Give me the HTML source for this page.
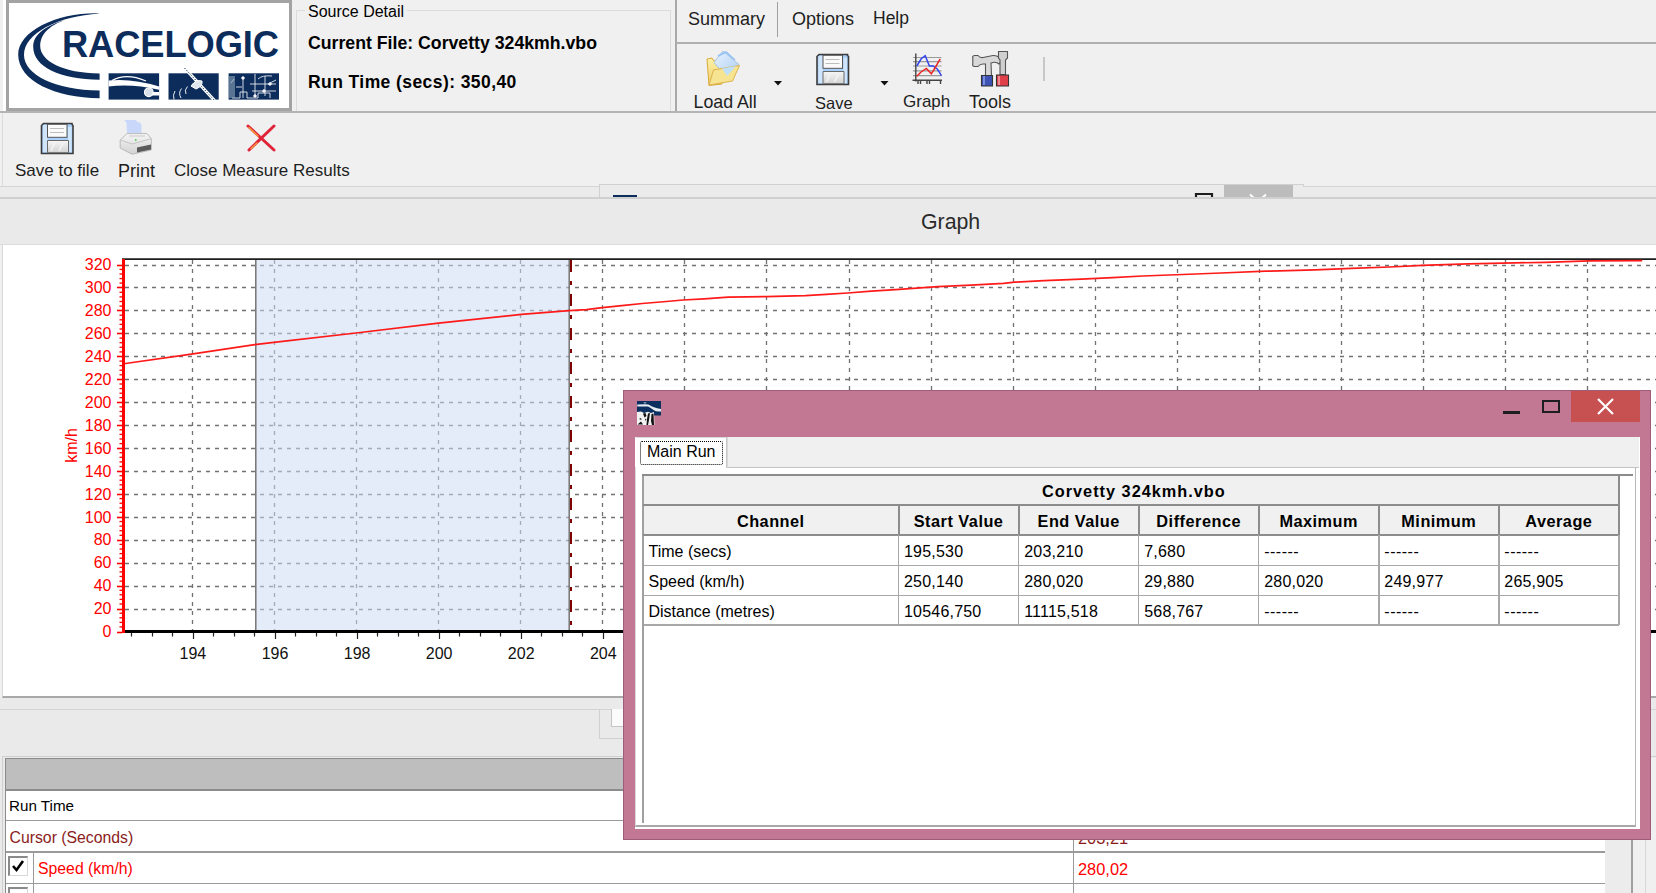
<!DOCTYPE html>
<html><head><meta charset="utf-8">
<style>
*{margin:0;padding:0;box-sizing:border-box}
html,body{width:1656px;height:893px;overflow:hidden;background:#f0f0f0;font-family:"Liberation Sans",sans-serif;position:relative}
.a{position:absolute}
.t{position:absolute;white-space:nowrap;line-height:1}
</style></head><body>

<!-- ===== TOP AREA ===== -->
<div class="a" style="left:3px;top:0;width:3px;height:111px;background:#fff"></div>
<div class="a" style="left:6px;top:0;width:286px;height:111px;background:#fff;border:3px solid #a3a3a3"></div>
<svg class="a" style="left:0;top:0" width="300" height="112" viewBox="0 0 300 112">
<g fill="#0c2d5b">
<path d="M99.6 13.4 C60 12 18 30 18.2 55 C18.6 81 55 97.8 99.6 98.2 L99.6 90.6 C55 90 24 74.5 24 55 C24 33 58 16 99.6 13.4Z"/>
<path d="M76 17 C46 24 33 34 33.2 47 C33.5 67 60 79.5 99.6 79.8 L99.6 73.6 C63 73 40.2 61 40.2 46 C40.3 32 53 22 76 17Z"/>
<text x="62" y="56.8" font-family="Liberation Sans" font-weight="bold" font-size="36.3" letter-spacing="-0.1">RACELOGIC</text>
<rect x="108.6" y="73.3" width="50.5" height="26.3"/>
<rect x="168.5" y="73.3" width="50.2" height="26.3"/>
<rect x="228.6" y="73.3" width="50.4" height="26.3"/>
</g>
<g fill="#fff" stroke="none">
<path d="M108.6 80.5 Q132 78 159.1 86.5 L159.1 89.8 Q132 83.5 108.6 86.5Z"/>
<rect x="152" y="92" width="7.2" height="3.5"/>
</g>
<path d="M112 80.5 Q126 72.5 146 81" fill="none" stroke="#fff" stroke-width="1.1"/>
<circle cx="148.8" cy="92.3" r="4.3" fill="#d9e0e8" stroke="#fff" stroke-width="1.2"/>
<g stroke="#fff" fill="none">
<path d="M184.5 68 L214.5 100.5" stroke-width="3.2"/>
<path d="M184.5 68 L214.5 100.5" stroke="#0c2d5b" stroke-width="1" stroke-dasharray="1.3 1.7"/>
<path d="M191 86 Q196 79 202 81 Q203 86 196 89Z" fill="#dfe5ec" stroke-width="1"/>
<path d="M187.5 86.5 Q184 90 186 94" stroke-width="0.9"/>
<path d="M181.5 88.5 Q178 93 181 98" stroke-width="0.9"/>
<path d="M175 91 Q172.5 95 174 99.5" stroke-width="0.9"/>
</g>
<g stroke="#e6ebf1" fill="none" stroke-width="0.9">
<path d="M243 77 V98 M255 74 V96 M265 76 V96 M231 83 L234 79 M232 98 H240 V92 H247 V98 H258 V93 H270 V98 M250 84 H276 M252 91 H276 M258 79 Q262 75 272 76 M268 84 L276 80 M236 87 H242"/>
<circle cx="243" cy="78" r="1.3" fill="#fff"/>
<circle cx="255" cy="96" r="1.3" fill="#fff"/>
<circle cx="270" cy="84" r="1.3" fill="#fff"/>
<circle cx="264" cy="91" r="1.3" fill="#fff"/>
<rect x="229" y="76" width="6" height="22" fill="#8fa3ba" stroke="none" opacity="0.6"/>
</g>
</svg>


<!-- group box -->
<div class="a" style="left:296px;top:10px;width:375px;height:102px;border:1px solid #dcdcdc;border-bottom:none"></div>
<div class="t" style="left:305px;top:3.5px;padding:0 3px;background:#f0f0f0;font-size:16px;color:#000">Source Detail</div>
<div class="t" style="left:308px;top:35.2px;font-size:17.7px;font-weight:bold;color:#000">Current File: Corvetty 324kmh.vbo</div>
<div class="t" style="left:308px;top:74px;font-size:17.5px;font-weight:bold;color:#000;letter-spacing:0.42px">Run Time (secs): 350,40</div>

<div class="a" style="left:675px;top:0;width:2px;height:112px;background:#a9a9a9"></div>
<div class="a" style="left:676px;top:42px;width:980px;height:2px;background:#b0b0b0"></div>
<div class="a" style="left:0;top:111px;width:1656px;height:2px;background:#b4b4b4"></div>

<!-- menu -->
<div class="t" style="left:688px;top:10px;font-size:18px;color:#1e1e1e">Summary</div>
<div class="a" style="left:777px;top:2px;width:1px;height:35px;background:#a0a0a0"></div>
<div class="t" style="left:792px;top:10px;font-size:18px;color:#1e1e1e">Options</div>
<div class="t" style="left:873px;top:10px;font-size:17.5px;color:#1e1e1e">Help</div>

<!-- toolbar 1 labels -->
<div class="t" style="left:693.5px;top:93.5px;font-size:17.8px;color:#1e1e1e">Load All</div>
<div class="t" style="left:815px;top:94.5px;font-size:16.5px;color:#1e1e1e">Save</div>
<div class="t" style="left:903px;top:93px;font-size:17px;color:#1e1e1e">Graph</div>
<div class="t" style="left:969px;top:93px;font-size:18px;color:#1e1e1e">Tools</div>
<div class="a" style="left:1043px;top:57px;width:2px;height:24px;background:#c8c8c8"></div>

<!-- ===== TOOLBAR 2 ===== -->
<div class="a" style="left:2px;top:113px;width:1654px;height:74px;border-left:1px solid #dcdcdc;border-bottom:1px solid #dcdcdc"></div>
<div class="t" style="left:15px;top:162px;font-size:17px;color:#1e1e1e">Save to file</div>
<div class="t" style="left:118px;top:162px;font-size:18px;color:#1e1e1e">Print</div>
<div class="t" style="left:174px;top:162px;font-size:17px;color:#1e1e1e">Close Measure Results</div>

<!-- hidden dialog strip -->
<div class="a" style="left:599px;top:184px;width:705px;height:15px;background:#ebebeb;border:1px solid #d0d0d0;border-bottom:none"></div>
<div class="a" style="left:1224px;top:185px;width:69px;height:13px;background:#bcbcbc"></div>
<div class="a" style="left:1303px;top:186px;width:353px;height:12px;background:#ebebeb;border-top:1px solid #d4d4d4"></div>
<div class="a" style="left:0px;top:186px;width:599px;height:12px;background:#ebebeb;border-top:1px solid #d4d4d4"></div>

<svg class="a" style="left:0;top:0" width="1656" height="200" viewBox="0 0 1656 200">
<defs>
<linearGradient id="fy" x1="0" y1="0" x2="0" y2="1"><stop offset="0" stop-color="#fbf2a8"/><stop offset="1" stop-color="#f2cf6a"/></linearGradient>
<linearGradient id="fb" x1="0" y1="0" x2="1" y2="1"><stop offset="0" stop-color="#eaf3fd"/><stop offset="1" stop-color="#a9cdf5"/></linearGradient>
<linearGradient id="gr" x1="0" y1="0" x2="0" y2="1"><stop offset="0" stop-color="#f6f6f6"/><stop offset="1" stop-color="#d2d2d2"/></linearGradient>
<g id="floppy">
<path d="M0.5 2.5 L2.5 0.5 L31 0.5 L31 1.5 L32 2.5 L32 30.5 L0.5 30.5Z" fill="#a8d0fa" stroke="#3c3c3c" stroke-width="1.6"/>
<rect x="2" y="2" width="4.5" height="27" fill="#cfe5fc"/>
<rect x="27" y="4" width="3.5" height="25" fill="#cfe5fc"/>
<rect x="6.5" y="1.3" width="19.5" height="13" fill="#fafafa" stroke="#555" stroke-width="1"/>
<path d="M9 5.5 H23 M9 9.5 H23" stroke="#bdbdbd" stroke-width="1"/>
<path d="M6.5 17.5 H27.5 V29.7 H6.5Z" fill="url(#gr)" stroke="#6a6a6a" stroke-width="1"/>
<path d="M14 19 L10 28 M22 20 L18 28" stroke="#f4f4f4" stroke-width="1.5"/>
</g>
</defs>

<!-- Load All: open folder with doc -->
<path d="M707 59 L712 58 L714 61 L722 61 L722 84 L709 85.5Z" fill="url(#fy)" stroke="#d9aa3c" stroke-width="1"/>
<path d="M723 51 L739 64.5 L726.5 77 L714 62.5Z" fill="url(#fb)" stroke="#9ab8dc" stroke-width="0.8"/>
<path d="M718 56 L726 52 L735 60" fill="none" stroke="#8fc0f4" stroke-width="1.5"/>
<path d="M709 85 L713.5 70 L739.5 65.5 L732.5 81Z" fill="#f7e493" stroke="#ddb24a" stroke-width="1"/>
<path d="M722 68.5 L736 66 L727 76Z" fill="#bfe0f6"/>
<!-- dropdown arrows -->
<path d="M774 81 H782 L778 85.5Z" fill="#111"/>
<path d="M880.5 81 H888.5 L884.5 85.5Z" fill="#111"/>
<!-- Save toolbar -->
<use href="#floppy" x="816.5" y="54"/>
<!-- Graph icon -->
<g stroke-width="1.2" fill="none">
<path d="M913 57.5 H941.5 M913 61.7 H941.5 M913 66 H941.5 M913 70.8 H941.5 M913 75.6 H941.5" stroke="#9a9a9a"/>
<path d="M915.8 53.5 V81.5 M912.5 80.2 H942 M918 80 V84 M920.5 80 V84 M927 80 V84 M929.5 80 V84 M940.5 80 V84" stroke="#444" stroke-width="1.4"/>
<path d="M916.8 66 L921 59 L925.2 55.7 L929.4 66 L933 66 L937.3 69 L941.5 75.6" stroke="#3344ee" stroke-width="1.5"/>
<path d="M916.8 76.2 L921 72 L926.4 68.4 L931.3 73.8 L935 68 L938.5 61.7 L940.3 59" stroke="#ee2222" stroke-width="1.5"/>
</g>
<!-- Tools icon -->
<path d="M972.8 58 Q972 56 974.5 55.5 L978 55.5 Q980 58 983 57.5 L993 55.5 Q1000 55 1001 62 L999 64 Q996 61 991 63 L991.5 76 L985.5 76 L985.5 64 L983 64 Q980 64 978 66.5 L974.5 66.5 Q972 66 972.8 64Z" fill="#d8d8d8" stroke="#555" stroke-width="1.1"/>
<path d="M981.5 75.5 H992.5 V86 H981.5Z" fill="#3c52b4" stroke="#333" stroke-width="1.1"/>
<path d="M984 76 V85" stroke="#8ea0e6" stroke-width="1.5"/>
<path d="M998.5 51.5 H1007.5 V58 L1005.5 60 V74.5 H1000 V60 L998.5 58Z" fill="#cfcfcf" stroke="#555" stroke-width="1.1"/>
<path d="M996.5 75 H1008.5 V86 H996.5Z" fill="#e0404a" stroke="#333" stroke-width="1.1"/>
<path d="M999 76 V85" stroke="#f7a2a8" stroke-width="1.5"/>
<!-- separator handled in html -->

<!-- Save to file floppy -->
<use href="#floppy" x="41" y="123"/>
<!-- Print icon -->
<path d="M124.3 120 H136 L137.5 122 L140 122.5 L141.5 125 V133 H127 L126.5 123Z" fill="#c9d8fa"/>
<path d="M120.2 140 L127 133.6 L147 133.6 L151.3 138.7 L151.3 150 L132 154.2 L120.2 148Z" fill="url(#gr)" stroke="#b4b4b4" stroke-width="0.9"/>
<path d="M120.2 140 L132 144 L151.3 138.7" fill="none" stroke="#c4c4c4" stroke-width="1"/>
<path d="M137 147.5 L151 144.5 V149.5 L137 152.5Z" fill="#5a5a5a"/>
<path d="M129 136 L145 136" stroke="#dedede" stroke-width="2"/>
<circle cx="135.8" cy="140" r="0.9" fill="#5c5"/>
<!-- Close X icon -->
<path d="M248 126 L274 150 M274 126 L249 150" stroke="#e0243a" stroke-width="3" stroke-linecap="round"/>
<path d="M249 127.5 L258 136" stroke="#f59a3a" stroke-width="1.5" stroke-linecap="round"/>
<path d="M251 148.5 L257 143" stroke="#f59a3a" stroke-width="1.4" stroke-linecap="round"/>

<!-- hidden dialog pieces -->
<rect x="613" y="195" width="24" height="3" fill="#0c2d5b"/>
<path d="M1196 198 V194 H1212 V198" fill="none" stroke="#1e1e1e" stroke-width="2.2"/>
<path d="M1250 194.5 L1254 198 M1266 194.5 L1262 198" stroke="#fff" stroke-width="2"/>
</svg>

<!-- ===== GRAPH HEADER ===== -->
<div class="a" style="left:0;top:197px;width:1656px;height:48px;background:#eaeaea;border-top:2px solid #d0d0d0;border-bottom:1px solid #dcdcdc"></div>
<div class="t" style="left:921px;top:212px;font-size:21.3px;color:#2a2a2a">Graph</div>

<!-- ===== WHITE GRAPH PANEL ===== -->
<div class="a" style="left:2px;top:245px;width:1654px;height:453px;background:#fff;border-left:1px solid #dadada;border-bottom:2px solid #a8a8a8"></div>

<svg class="a" style="left:0;top:245px" width="1656" height="452" viewBox="0 245 1656 452">
<line x1="125" y1="265.5" x2="1656" y2="265.5" stroke="#727272" stroke-width="1.3" stroke-dasharray="4 5"/>
<line x1="125" y1="287.5" x2="1656" y2="287.5" stroke="#727272" stroke-width="1.3" stroke-dasharray="4 5"/>
<line x1="125" y1="310.5" x2="1656" y2="310.5" stroke="#727272" stroke-width="1.3" stroke-dasharray="4 5"/>
<line x1="125" y1="333.5" x2="1656" y2="333.5" stroke="#727272" stroke-width="1.3" stroke-dasharray="4 5"/>
<line x1="125" y1="356.5" x2="1656" y2="356.5" stroke="#727272" stroke-width="1.3" stroke-dasharray="4 5"/>
<line x1="125" y1="379.5" x2="1656" y2="379.5" stroke="#727272" stroke-width="1.3" stroke-dasharray="4 5"/>
<line x1="125" y1="402.5" x2="1656" y2="402.5" stroke="#727272" stroke-width="1.3" stroke-dasharray="4 5"/>
<line x1="125" y1="425.5" x2="1656" y2="425.5" stroke="#727272" stroke-width="1.3" stroke-dasharray="4 5"/>
<line x1="125" y1="448.5" x2="1656" y2="448.5" stroke="#727272" stroke-width="1.3" stroke-dasharray="4 5"/>
<line x1="125" y1="471.5" x2="1656" y2="471.5" stroke="#727272" stroke-width="1.3" stroke-dasharray="4 5"/>
<line x1="125" y1="494.5" x2="1656" y2="494.5" stroke="#727272" stroke-width="1.3" stroke-dasharray="4 5"/>
<line x1="125" y1="517.5" x2="1656" y2="517.5" stroke="#727272" stroke-width="1.3" stroke-dasharray="4 5"/>
<line x1="125" y1="540.5" x2="1656" y2="540.5" stroke="#727272" stroke-width="1.3" stroke-dasharray="4 5"/>
<line x1="125" y1="563.5" x2="1656" y2="563.5" stroke="#727272" stroke-width="1.3" stroke-dasharray="4 5"/>
<line x1="125" y1="586.5" x2="1656" y2="586.5" stroke="#727272" stroke-width="1.3" stroke-dasharray="4 5"/>
<line x1="125" y1="609.5" x2="1656" y2="609.5" stroke="#727272" stroke-width="1.3" stroke-dasharray="4 5"/>
<line x1="192.5" y1="260" x2="192.5" y2="630" stroke="#727272" stroke-width="1.3" stroke-dasharray="4 5"/>
<line x1="274.5" y1="260" x2="274.5" y2="630" stroke="#727272" stroke-width="1.3" stroke-dasharray="4 5"/>
<line x1="356.5" y1="260" x2="356.5" y2="630" stroke="#727272" stroke-width="1.3" stroke-dasharray="4 5"/>
<line x1="438.5" y1="260" x2="438.5" y2="630" stroke="#727272" stroke-width="1.3" stroke-dasharray="4 5"/>
<line x1="520.5" y1="260" x2="520.5" y2="630" stroke="#727272" stroke-width="1.3" stroke-dasharray="4 5"/>
<line x1="602.5" y1="260" x2="602.5" y2="630" stroke="#727272" stroke-width="1.3" stroke-dasharray="4 5"/>
<line x1="684.5" y1="260" x2="684.5" y2="630" stroke="#727272" stroke-width="1.3" stroke-dasharray="4 5"/>
<line x1="766.5" y1="260" x2="766.5" y2="630" stroke="#727272" stroke-width="1.3" stroke-dasharray="4 5"/>
<line x1="849.5" y1="260" x2="849.5" y2="630" stroke="#727272" stroke-width="1.3" stroke-dasharray="4 5"/>
<line x1="931.5" y1="260" x2="931.5" y2="630" stroke="#727272" stroke-width="1.3" stroke-dasharray="4 5"/>
<line x1="1013.5" y1="260" x2="1013.5" y2="630" stroke="#727272" stroke-width="1.3" stroke-dasharray="4 5"/>
<line x1="1095.5" y1="260" x2="1095.5" y2="630" stroke="#727272" stroke-width="1.3" stroke-dasharray="4 5"/>
<line x1="1177.5" y1="260" x2="1177.5" y2="630" stroke="#727272" stroke-width="1.3" stroke-dasharray="4 5"/>
<line x1="1259.5" y1="260" x2="1259.5" y2="630" stroke="#727272" stroke-width="1.3" stroke-dasharray="4 5"/>
<line x1="1341.5" y1="260" x2="1341.5" y2="630" stroke="#727272" stroke-width="1.3" stroke-dasharray="4 5"/>
<line x1="1423.5" y1="260" x2="1423.5" y2="630" stroke="#727272" stroke-width="1.3" stroke-dasharray="4 5"/>
<line x1="1505.5" y1="260" x2="1505.5" y2="630" stroke="#727272" stroke-width="1.3" stroke-dasharray="4 5"/>
<line x1="1587.5" y1="260" x2="1587.5" y2="630" stroke="#727272" stroke-width="1.3" stroke-dasharray="4 5"/>
<rect x="256.5" y="260" width="312.0" height="370" fill="rgb(203,220,242)" fill-opacity="0.54"/>
<line x1="255.8" y1="260" x2="255.8" y2="631" stroke="#7a7a7a" stroke-width="1.6"/>
<line x1="569.2" y1="260" x2="569.2" y2="631" stroke="#7a7a7a" stroke-width="1.6"/>
<line x1="571" y1="260" x2="571" y2="631" stroke="#800000" stroke-width="2" stroke-dasharray="12 9 4 9"/>
<line x1="122" y1="259.2" x2="1656" y2="259.2" stroke="#1e1e1e" stroke-width="1.8"/>
<line x1="131.5" y1="633" x2="131.5" y2="636.5" stroke="#222" stroke-width="1.2"/>
<line x1="152.5" y1="633" x2="152.5" y2="636.5" stroke="#222" stroke-width="1.2"/>
<line x1="172.5" y1="633" x2="172.5" y2="636.5" stroke="#222" stroke-width="1.2"/>
<line x1="193.5" y1="633" x2="193.5" y2="639" stroke="#222" stroke-width="1.2"/>
<line x1="213.5" y1="633" x2="213.5" y2="636.5" stroke="#222" stroke-width="1.2"/>
<line x1="234.5" y1="633" x2="234.5" y2="636.5" stroke="#222" stroke-width="1.2"/>
<line x1="254.5" y1="633" x2="254.5" y2="636.5" stroke="#222" stroke-width="1.2"/>
<line x1="275.5" y1="633" x2="275.5" y2="639" stroke="#222" stroke-width="1.2"/>
<line x1="295.5" y1="633" x2="295.5" y2="636.5" stroke="#222" stroke-width="1.2"/>
<line x1="316.5" y1="633" x2="316.5" y2="636.5" stroke="#222" stroke-width="1.2"/>
<line x1="336.5" y1="633" x2="336.5" y2="636.5" stroke="#222" stroke-width="1.2"/>
<line x1="357.5" y1="633" x2="357.5" y2="639" stroke="#222" stroke-width="1.2"/>
<line x1="377.5" y1="633" x2="377.5" y2="636.5" stroke="#222" stroke-width="1.2"/>
<line x1="398.5" y1="633" x2="398.5" y2="636.5" stroke="#222" stroke-width="1.2"/>
<line x1="418.5" y1="633" x2="418.5" y2="636.5" stroke="#222" stroke-width="1.2"/>
<line x1="439.5" y1="633" x2="439.5" y2="639" stroke="#222" stroke-width="1.2"/>
<line x1="459.5" y1="633" x2="459.5" y2="636.5" stroke="#222" stroke-width="1.2"/>
<line x1="480.5" y1="633" x2="480.5" y2="636.5" stroke="#222" stroke-width="1.2"/>
<line x1="500.5" y1="633" x2="500.5" y2="636.5" stroke="#222" stroke-width="1.2"/>
<line x1="521.5" y1="633" x2="521.5" y2="639" stroke="#222" stroke-width="1.2"/>
<line x1="541.5" y1="633" x2="541.5" y2="636.5" stroke="#222" stroke-width="1.2"/>
<line x1="562.5" y1="633" x2="562.5" y2="636.5" stroke="#222" stroke-width="1.2"/>
<line x1="582.5" y1="633" x2="582.5" y2="636.5" stroke="#222" stroke-width="1.2"/>
<line x1="603.5" y1="633" x2="603.5" y2="639" stroke="#222" stroke-width="1.2"/>
<line x1="624.5" y1="633" x2="624.5" y2="636.5" stroke="#222" stroke-width="1.2"/>
<line x1="644.5" y1="633" x2="644.5" y2="636.5" stroke="#222" stroke-width="1.2"/>
<line x1="665.5" y1="633" x2="665.5" y2="636.5" stroke="#222" stroke-width="1.2"/>
<line x1="685.5" y1="633" x2="685.5" y2="639" stroke="#222" stroke-width="1.2"/>
<line x1="706.5" y1="633" x2="706.5" y2="636.5" stroke="#222" stroke-width="1.2"/>
<line x1="726.5" y1="633" x2="726.5" y2="636.5" stroke="#222" stroke-width="1.2"/>
<line x1="747.5" y1="633" x2="747.5" y2="636.5" stroke="#222" stroke-width="1.2"/>
<line x1="767.5" y1="633" x2="767.5" y2="639" stroke="#222" stroke-width="1.2"/>
<line x1="788.5" y1="633" x2="788.5" y2="636.5" stroke="#222" stroke-width="1.2"/>
<line x1="808.5" y1="633" x2="808.5" y2="636.5" stroke="#222" stroke-width="1.2"/>
<line x1="829.5" y1="633" x2="829.5" y2="636.5" stroke="#222" stroke-width="1.2"/>
<line x1="849.5" y1="633" x2="849.5" y2="639" stroke="#222" stroke-width="1.2"/>
<line x1="870.5" y1="633" x2="870.5" y2="636.5" stroke="#222" stroke-width="1.2"/>
<line x1="890.5" y1="633" x2="890.5" y2="636.5" stroke="#222" stroke-width="1.2"/>
<line x1="911.5" y1="633" x2="911.5" y2="636.5" stroke="#222" stroke-width="1.2"/>
<line x1="931.5" y1="633" x2="931.5" y2="639" stroke="#222" stroke-width="1.2"/>
<line x1="952.5" y1="633" x2="952.5" y2="636.5" stroke="#222" stroke-width="1.2"/>
<line x1="972.5" y1="633" x2="972.5" y2="636.5" stroke="#222" stroke-width="1.2"/>
<line x1="993.5" y1="633" x2="993.5" y2="636.5" stroke="#222" stroke-width="1.2"/>
<line x1="1013.5" y1="633" x2="1013.5" y2="639" stroke="#222" stroke-width="1.2"/>
<line x1="1034.5" y1="633" x2="1034.5" y2="636.5" stroke="#222" stroke-width="1.2"/>
<line x1="1054.5" y1="633" x2="1054.5" y2="636.5" stroke="#222" stroke-width="1.2"/>
<line x1="1075.5" y1="633" x2="1075.5" y2="636.5" stroke="#222" stroke-width="1.2"/>
<line x1="1095.5" y1="633" x2="1095.5" y2="639" stroke="#222" stroke-width="1.2"/>
<line x1="1116.5" y1="633" x2="1116.5" y2="636.5" stroke="#222" stroke-width="1.2"/>
<line x1="1137.5" y1="633" x2="1137.5" y2="636.5" stroke="#222" stroke-width="1.2"/>
<line x1="1157.5" y1="633" x2="1157.5" y2="636.5" stroke="#222" stroke-width="1.2"/>
<line x1="1178.5" y1="633" x2="1178.5" y2="639" stroke="#222" stroke-width="1.2"/>
<line x1="1198.5" y1="633" x2="1198.5" y2="636.5" stroke="#222" stroke-width="1.2"/>
<line x1="1219.5" y1="633" x2="1219.5" y2="636.5" stroke="#222" stroke-width="1.2"/>
<line x1="1239.5" y1="633" x2="1239.5" y2="636.5" stroke="#222" stroke-width="1.2"/>
<line x1="1260.5" y1="633" x2="1260.5" y2="639" stroke="#222" stroke-width="1.2"/>
<line x1="1280.5" y1="633" x2="1280.5" y2="636.5" stroke="#222" stroke-width="1.2"/>
<line x1="1301.5" y1="633" x2="1301.5" y2="636.5" stroke="#222" stroke-width="1.2"/>
<line x1="1321.5" y1="633" x2="1321.5" y2="636.5" stroke="#222" stroke-width="1.2"/>
<line x1="1342.5" y1="633" x2="1342.5" y2="639" stroke="#222" stroke-width="1.2"/>
<line x1="1362.5" y1="633" x2="1362.5" y2="636.5" stroke="#222" stroke-width="1.2"/>
<line x1="1383.5" y1="633" x2="1383.5" y2="636.5" stroke="#222" stroke-width="1.2"/>
<line x1="1403.5" y1="633" x2="1403.5" y2="636.5" stroke="#222" stroke-width="1.2"/>
<line x1="1424.5" y1="633" x2="1424.5" y2="639" stroke="#222" stroke-width="1.2"/>
<line x1="1444.5" y1="633" x2="1444.5" y2="636.5" stroke="#222" stroke-width="1.2"/>
<line x1="1465.5" y1="633" x2="1465.5" y2="636.5" stroke="#222" stroke-width="1.2"/>
<line x1="1485.5" y1="633" x2="1485.5" y2="636.5" stroke="#222" stroke-width="1.2"/>
<line x1="1506.5" y1="633" x2="1506.5" y2="639" stroke="#222" stroke-width="1.2"/>
<line x1="1526.5" y1="633" x2="1526.5" y2="636.5" stroke="#222" stroke-width="1.2"/>
<line x1="1547.5" y1="633" x2="1547.5" y2="636.5" stroke="#222" stroke-width="1.2"/>
<line x1="1567.5" y1="633" x2="1567.5" y2="636.5" stroke="#222" stroke-width="1.2"/>
<line x1="1588.5" y1="633" x2="1588.5" y2="639" stroke="#222" stroke-width="1.2"/>
<line x1="1608.5" y1="633" x2="1608.5" y2="636.5" stroke="#222" stroke-width="1.2"/>
<line x1="1629.5" y1="633" x2="1629.5" y2="636.5" stroke="#222" stroke-width="1.2"/>
<line x1="1650.5" y1="633" x2="1650.5" y2="636.5" stroke="#222" stroke-width="1.2"/>
<rect x="122" y="630" width="1534" height="3" fill="#000"/>
<polyline fill="none" stroke="#ff1a1a" stroke-width="1.7" points="122,364.0 191.4,354.2 254.8,344.6 276,342.1 356,333.0 438.5,323.2 521.5,314.4 569.1,310.6 586.4,309.6 600,307.8 624.2,305.3 642.3,303.5 666.4,301.5 683,300.0 704.2,298.8 728.3,297.2 747,296.8 766,296.6 805.3,295.6 826.4,294.3 847.6,293.0 871.4,291.2 895.6,289.7 916.7,288.2 937.8,286.7 971,285.2 1003.5,283.4 1014.8,282.2 1044.3,280.7 1081.3,279.2 1112.6,277.6 1142.8,276.0 1182.8,274.5 1221.3,273.0 1265.9,271.2 1315,269.9 1351.5,268.3 1389.3,267.0 1422.2,265.4 1467.8,263.9 1545.3,262.3 1588.9,260.9 1642.2,260.7"/>
<line x1="117" y1="265.5" x2="122" y2="265.5" stroke="#ff0000" stroke-width="1.6"/>
<line x1="117" y1="287.5" x2="122" y2="287.5" stroke="#ff0000" stroke-width="1.6"/>
<line x1="117" y1="310.5" x2="122" y2="310.5" stroke="#ff0000" stroke-width="1.6"/>
<line x1="117" y1="333.5" x2="122" y2="333.5" stroke="#ff0000" stroke-width="1.6"/>
<line x1="117" y1="356.5" x2="122" y2="356.5" stroke="#ff0000" stroke-width="1.6"/>
<line x1="117" y1="379.5" x2="122" y2="379.5" stroke="#ff0000" stroke-width="1.6"/>
<line x1="117" y1="402.5" x2="122" y2="402.5" stroke="#ff0000" stroke-width="1.6"/>
<line x1="117" y1="425.5" x2="122" y2="425.5" stroke="#ff0000" stroke-width="1.6"/>
<line x1="117" y1="448.5" x2="122" y2="448.5" stroke="#ff0000" stroke-width="1.6"/>
<line x1="117" y1="471.5" x2="122" y2="471.5" stroke="#ff0000" stroke-width="1.6"/>
<line x1="117" y1="494.5" x2="122" y2="494.5" stroke="#ff0000" stroke-width="1.6"/>
<line x1="117" y1="517.5" x2="122" y2="517.5" stroke="#ff0000" stroke-width="1.6"/>
<line x1="117" y1="540.5" x2="122" y2="540.5" stroke="#ff0000" stroke-width="1.6"/>
<line x1="117" y1="563.5" x2="122" y2="563.5" stroke="#ff0000" stroke-width="1.6"/>
<line x1="117" y1="586.5" x2="122" y2="586.5" stroke="#ff0000" stroke-width="1.6"/>
<line x1="117" y1="609.5" x2="122" y2="609.5" stroke="#ff0000" stroke-width="1.6"/>
<line x1="117" y1="632.5" x2="122" y2="632.5" stroke="#ff0000" stroke-width="1.6"/>
<line x1="119.5" y1="269.4" x2="122" y2="269.4" stroke="#ff0000" stroke-width="1.3"/>
<line x1="119.5" y1="274.0" x2="122" y2="274.0" stroke="#ff0000" stroke-width="1.3"/>
<line x1="119.5" y1="278.6" x2="122" y2="278.6" stroke="#ff0000" stroke-width="1.3"/>
<line x1="119.5" y1="283.1" x2="122" y2="283.1" stroke="#ff0000" stroke-width="1.3"/>
<line x1="119.5" y1="292.3" x2="122" y2="292.3" stroke="#ff0000" stroke-width="1.3"/>
<line x1="119.5" y1="296.9" x2="122" y2="296.9" stroke="#ff0000" stroke-width="1.3"/>
<line x1="119.5" y1="301.5" x2="122" y2="301.5" stroke="#ff0000" stroke-width="1.3"/>
<line x1="119.5" y1="306.1" x2="122" y2="306.1" stroke="#ff0000" stroke-width="1.3"/>
<line x1="119.5" y1="315.2" x2="122" y2="315.2" stroke="#ff0000" stroke-width="1.3"/>
<line x1="119.5" y1="319.8" x2="122" y2="319.8" stroke="#ff0000" stroke-width="1.3"/>
<line x1="119.5" y1="324.4" x2="122" y2="324.4" stroke="#ff0000" stroke-width="1.3"/>
<line x1="119.5" y1="329.0" x2="122" y2="329.0" stroke="#ff0000" stroke-width="1.3"/>
<line x1="119.5" y1="338.1" x2="122" y2="338.1" stroke="#ff0000" stroke-width="1.3"/>
<line x1="119.5" y1="342.7" x2="122" y2="342.7" stroke="#ff0000" stroke-width="1.3"/>
<line x1="119.5" y1="347.3" x2="122" y2="347.3" stroke="#ff0000" stroke-width="1.3"/>
<line x1="119.5" y1="351.9" x2="122" y2="351.9" stroke="#ff0000" stroke-width="1.3"/>
<line x1="119.5" y1="361.1" x2="122" y2="361.1" stroke="#ff0000" stroke-width="1.3"/>
<line x1="119.5" y1="365.6" x2="122" y2="365.6" stroke="#ff0000" stroke-width="1.3"/>
<line x1="119.5" y1="370.2" x2="122" y2="370.2" stroke="#ff0000" stroke-width="1.3"/>
<line x1="119.5" y1="374.8" x2="122" y2="374.8" stroke="#ff0000" stroke-width="1.3"/>
<line x1="119.5" y1="384.0" x2="122" y2="384.0" stroke="#ff0000" stroke-width="1.3"/>
<line x1="119.5" y1="388.6" x2="122" y2="388.6" stroke="#ff0000" stroke-width="1.3"/>
<line x1="119.5" y1="393.2" x2="122" y2="393.2" stroke="#ff0000" stroke-width="1.3"/>
<line x1="119.5" y1="397.7" x2="122" y2="397.7" stroke="#ff0000" stroke-width="1.3"/>
<line x1="119.5" y1="406.9" x2="122" y2="406.9" stroke="#ff0000" stroke-width="1.3"/>
<line x1="119.5" y1="411.5" x2="122" y2="411.5" stroke="#ff0000" stroke-width="1.3"/>
<line x1="119.5" y1="416.1" x2="122" y2="416.1" stroke="#ff0000" stroke-width="1.3"/>
<line x1="119.5" y1="420.7" x2="122" y2="420.7" stroke="#ff0000" stroke-width="1.3"/>
<line x1="119.5" y1="429.8" x2="122" y2="429.8" stroke="#ff0000" stroke-width="1.3"/>
<line x1="119.5" y1="434.4" x2="122" y2="434.4" stroke="#ff0000" stroke-width="1.3"/>
<line x1="119.5" y1="439.0" x2="122" y2="439.0" stroke="#ff0000" stroke-width="1.3"/>
<line x1="119.5" y1="443.6" x2="122" y2="443.6" stroke="#ff0000" stroke-width="1.3"/>
<line x1="119.5" y1="452.7" x2="122" y2="452.7" stroke="#ff0000" stroke-width="1.3"/>
<line x1="119.5" y1="457.3" x2="122" y2="457.3" stroke="#ff0000" stroke-width="1.3"/>
<line x1="119.5" y1="461.9" x2="122" y2="461.9" stroke="#ff0000" stroke-width="1.3"/>
<line x1="119.5" y1="466.5" x2="122" y2="466.5" stroke="#ff0000" stroke-width="1.3"/>
<line x1="119.5" y1="475.7" x2="122" y2="475.7" stroke="#ff0000" stroke-width="1.3"/>
<line x1="119.5" y1="480.2" x2="122" y2="480.2" stroke="#ff0000" stroke-width="1.3"/>
<line x1="119.5" y1="484.8" x2="122" y2="484.8" stroke="#ff0000" stroke-width="1.3"/>
<line x1="119.5" y1="489.4" x2="122" y2="489.4" stroke="#ff0000" stroke-width="1.3"/>
<line x1="119.5" y1="498.6" x2="122" y2="498.6" stroke="#ff0000" stroke-width="1.3"/>
<line x1="119.5" y1="503.2" x2="122" y2="503.2" stroke="#ff0000" stroke-width="1.3"/>
<line x1="119.5" y1="507.8" x2="122" y2="507.8" stroke="#ff0000" stroke-width="1.3"/>
<line x1="119.5" y1="512.3" x2="122" y2="512.3" stroke="#ff0000" stroke-width="1.3"/>
<line x1="119.5" y1="521.5" x2="122" y2="521.5" stroke="#ff0000" stroke-width="1.3"/>
<line x1="119.5" y1="526.1" x2="122" y2="526.1" stroke="#ff0000" stroke-width="1.3"/>
<line x1="119.5" y1="530.7" x2="122" y2="530.7" stroke="#ff0000" stroke-width="1.3"/>
<line x1="119.5" y1="535.3" x2="122" y2="535.3" stroke="#ff0000" stroke-width="1.3"/>
<line x1="119.5" y1="544.4" x2="122" y2="544.4" stroke="#ff0000" stroke-width="1.3"/>
<line x1="119.5" y1="549.0" x2="122" y2="549.0" stroke="#ff0000" stroke-width="1.3"/>
<line x1="119.5" y1="553.6" x2="122" y2="553.6" stroke="#ff0000" stroke-width="1.3"/>
<line x1="119.5" y1="558.2" x2="122" y2="558.2" stroke="#ff0000" stroke-width="1.3"/>
<line x1="119.5" y1="567.3" x2="122" y2="567.3" stroke="#ff0000" stroke-width="1.3"/>
<line x1="119.5" y1="571.9" x2="122" y2="571.9" stroke="#ff0000" stroke-width="1.3"/>
<line x1="119.5" y1="576.5" x2="122" y2="576.5" stroke="#ff0000" stroke-width="1.3"/>
<line x1="119.5" y1="581.1" x2="122" y2="581.1" stroke="#ff0000" stroke-width="1.3"/>
<line x1="119.5" y1="590.3" x2="122" y2="590.3" stroke="#ff0000" stroke-width="1.3"/>
<line x1="119.5" y1="594.8" x2="122" y2="594.8" stroke="#ff0000" stroke-width="1.3"/>
<line x1="119.5" y1="599.4" x2="122" y2="599.4" stroke="#ff0000" stroke-width="1.3"/>
<line x1="119.5" y1="604.0" x2="122" y2="604.0" stroke="#ff0000" stroke-width="1.3"/>
<line x1="119.5" y1="613.2" x2="122" y2="613.2" stroke="#ff0000" stroke-width="1.3"/>
<line x1="119.5" y1="617.8" x2="122" y2="617.8" stroke="#ff0000" stroke-width="1.3"/>
<line x1="119.5" y1="622.4" x2="122" y2="622.4" stroke="#ff0000" stroke-width="1.3"/>
<line x1="119.5" y1="626.9" x2="122" y2="626.9" stroke="#ff0000" stroke-width="1.3"/>
<rect x="122" y="259" width="3" height="374" fill="#ff0000"/>
<text x="111.5" y="270.4" text-anchor="end" font-family="Liberation Sans" font-size="16" fill="#ff0000">320</text>
<text x="111.5" y="293.3" text-anchor="end" font-family="Liberation Sans" font-size="16" fill="#ff0000">300</text>
<text x="111.5" y="316.2" text-anchor="end" font-family="Liberation Sans" font-size="16" fill="#ff0000">280</text>
<text x="111.5" y="339.2" text-anchor="end" font-family="Liberation Sans" font-size="16" fill="#ff0000">260</text>
<text x="111.5" y="362.1" text-anchor="end" font-family="Liberation Sans" font-size="16" fill="#ff0000">240</text>
<text x="111.5" y="385.0" text-anchor="end" font-family="Liberation Sans" font-size="16" fill="#ff0000">220</text>
<text x="111.5" y="407.9" text-anchor="end" font-family="Liberation Sans" font-size="16" fill="#ff0000">200</text>
<text x="111.5" y="430.8" text-anchor="end" font-family="Liberation Sans" font-size="16" fill="#ff0000">180</text>
<text x="111.5" y="453.8" text-anchor="end" font-family="Liberation Sans" font-size="16" fill="#ff0000">160</text>
<text x="111.5" y="476.7" text-anchor="end" font-family="Liberation Sans" font-size="16" fill="#ff0000">140</text>
<text x="111.5" y="499.6" text-anchor="end" font-family="Liberation Sans" font-size="16" fill="#ff0000">120</text>
<text x="111.5" y="522.5" text-anchor="end" font-family="Liberation Sans" font-size="16" fill="#ff0000">100</text>
<text x="111.5" y="545.4" text-anchor="end" font-family="Liberation Sans" font-size="16" fill="#ff0000">80</text>
<text x="111.5" y="568.4" text-anchor="end" font-family="Liberation Sans" font-size="16" fill="#ff0000">60</text>
<text x="111.5" y="591.3" text-anchor="end" font-family="Liberation Sans" font-size="16" fill="#ff0000">40</text>
<text x="111.5" y="614.2" text-anchor="end" font-family="Liberation Sans" font-size="16" fill="#ff0000">20</text>
<text x="111.5" y="637.1" text-anchor="end" font-family="Liberation Sans" font-size="16" fill="#ff0000">0</text>
<text x="192.9" y="659" text-anchor="middle" font-family="Liberation Sans" font-size="16" fill="#111">194</text>
<text x="275.0" y="659" text-anchor="middle" font-family="Liberation Sans" font-size="16" fill="#111">196</text>
<text x="357.1" y="659" text-anchor="middle" font-family="Liberation Sans" font-size="16" fill="#111">198</text>
<text x="439.1" y="659" text-anchor="middle" font-family="Liberation Sans" font-size="16" fill="#111">200</text>
<text x="521.2" y="659" text-anchor="middle" font-family="Liberation Sans" font-size="16" fill="#111">202</text>
<text x="603.3" y="659" text-anchor="middle" font-family="Liberation Sans" font-size="16" fill="#111">204</text>
<text x="685.4" y="659" text-anchor="middle" font-family="Liberation Sans" font-size="16" fill="#111">206</text>
<text x="767.5" y="659" text-anchor="middle" font-family="Liberation Sans" font-size="16" fill="#111">208</text>
<text x="849.5" y="659" text-anchor="middle" font-family="Liberation Sans" font-size="16" fill="#111">210</text>
<text x="931.6" y="659" text-anchor="middle" font-family="Liberation Sans" font-size="16" fill="#111">212</text>
<text x="1013.7" y="659" text-anchor="middle" font-family="Liberation Sans" font-size="16" fill="#111">214</text>
<text x="1095.8" y="659" text-anchor="middle" font-family="Liberation Sans" font-size="16" fill="#111">216</text>
<text x="1177.9" y="659" text-anchor="middle" font-family="Liberation Sans" font-size="16" fill="#111">218</text>
<text x="1259.9" y="659" text-anchor="middle" font-family="Liberation Sans" font-size="16" fill="#111">220</text>
<text x="1342.0" y="659" text-anchor="middle" font-family="Liberation Sans" font-size="16" fill="#111">222</text>
<text x="1424.1" y="659" text-anchor="middle" font-family="Liberation Sans" font-size="16" fill="#111">224</text>
<text x="1506.2" y="659" text-anchor="middle" font-family="Liberation Sans" font-size="16" fill="#111">226</text>
<text x="1588.3" y="659" text-anchor="middle" font-family="Liberation Sans" font-size="16" fill="#111">228</text>
<text transform="translate(76.6,445.5) rotate(-90)" text-anchor="middle" font-family="Liberation Sans" font-size="16" fill="#ff0000">km/h</text>
</svg>
<!-- ===== BOTTOM BAND ===== -->
<div class="a" style="left:0;top:698px;width:1656px;height:195px;background:#eaeaea"></div>
<div class="a" style="left:0;top:709px;width:1656px;height:1px;background:#d4d4d4"></div>
<div class="a" style="left:599px;top:709px;width:40px;height:30px;border-left:1px solid #d0d0d0;border-bottom:1px solid #d0d0d0"></div>
<div class="a" style="left:611px;top:709px;width:14px;height:18px;background:#fbfbfb;border-left:1px solid #c4c4c4;border-bottom:1px solid #c4c4c4"></div>
<div class="a" style="left:2px;top:756px;width:1654px;height:137px;border-left:1px solid #cfcfcf;border-top:1px solid #cfcfcf"></div>
<div class="a" style="left:5px;top:758px;width:1600px;height:135px;background:#fff;border-left:1px solid #8a8a8a;border-top:1px solid #8a8a8a"></div>
<div class="a" style="left:6px;top:759px;width:1599px;height:30px;background:#bebebe"></div>
<div class="a" style="left:5px;top:788.5px;width:1600px;height:2px;background:#8c8c8c"></div>
<div class="a" style="left:6px;top:819.7px;width:1599px;height:1.7px;background:#9a9a9a"></div>
<div class="a" style="left:6px;top:851.2px;width:1599px;height:1.7px;background:#9a9a9a"></div>
<div class="a" style="left:6px;top:882.7px;width:1599px;height:1.7px;background:#9a9a9a"></div>
<div class="a" style="left:32.5px;top:852px;width:1.7px;height:41px;background:#9a9a9a"></div>
<div class="a" style="left:1072.7px;top:790px;width:1.7px;height:103px;background:#9a9a9a"></div>
<div class="a" style="left:1605px;top:758px;width:51px;height:135px;background:#ececec"></div>
<div class="a" style="left:1631px;top:758px;width:2px;height:135px;background:#a0a0a0"></div>
<div class="a" style="left:1633px;top:758px;width:23px;height:135px;background:#f0f0f0"></div>
<div class="a" style="left:1645px;top:758px;width:1px;height:135px;background:#d8d8d8"></div>
<div class="t" style="left:9px;top:797.5px;font-size:15.2px;color:#000">Run Time</div>
<div class="t" style="left:9.5px;top:829.5px;font-size:15.8px;color:#8b1c1c">Cursor (Seconds)</div>
<div class="t" style="left:38px;top:860.5px;font-size:15.8px;color:#ff0000">Speed (km/h)</div>
<div class="t" style="left:1078px;top:829.5px;font-size:16.4px;color:#8b1c1c">203,21</div>
<div class="t" style="left:1078px;top:860.5px;font-size:16.4px;color:#ff0000">280,02</div>
<div class="a" style="left:8px;top:856px;width:20px;height:20px;background:#fff;border:2px solid #8a8a8a;border-right:1px solid #d8d8d8;border-bottom:1px solid #d8d8d8"></div>
<svg class="a" style="left:8px;top:856px" width="20" height="20"><path d="M5 10 L8.5 14 L15 5" fill="none" stroke="#000" stroke-width="2.6"/></svg>
<div class="a" style="left:8px;top:887px;width:20px;height:20px;background:#fff;border:2px solid #8a8a8a;border-right:1px solid #d8d8d8;border-bottom:1px solid #d8d8d8"></div>
<!-- ===== DIALOG ===== -->
<div class="a" style="left:623px;top:390px;width:1028px;height:450px;background:#c27893;border:1px solid #9e5c78"></div>
<div class="a" style="left:635px;top:437px;width:1005px;height:392px;background:#fff"></div>
<div class="a" style="left:727px;top:437px;width:912px;height:31px;background:#f0f0f0;border-bottom:1px solid #c4c4c4;border-left:1px solid #d8d8d8"></div>
<div class="a" style="left:635px;top:467px;width:1001px;height:360px;border-left:1px solid #dadada;border-right:1px solid #b8b8b8;border-bottom:2px solid #a8a8a8"></div>
<div class="a" style="left:636px;top:437px;width:91px;height:31px;border-top:1px solid #dadada;border-right:1px solid #c8c8c8"></div>
<div class="a" style="left:640px;top:441px;width:83px;height:24px;border:1px dotted #000;border-radius:2px"></div>
<div class="t" style="left:647px;top:444px;font-size:16px;color:#000">Main Run</div>
<div class="a" style="left:642px;top:474px;width:2px;height:349px;background:#a0a0a0"></div>
<div class="a" style="left:642px;top:474px;width:991px;height:2px;background:#8c8c8c"></div>
<div class="a" style="left:644px;top:476px;width:975px;height:29px;background:#f0f0f0"></div>
<div class="t" style="left:1042px;top:482.7px;font-size:16.3px;font-weight:bold;color:#000;letter-spacing:1px">Corvetty 324kmh.vbo</div>
<div class="a" style="left:1618px;top:476px;width:2px;height:30px;background:#8c8c8c"></div>
<div class="a" style="left:644px;top:505px;width:975px;height:30px;background:#f0f0f0"></div>
<div class="a" style="left:643px;top:504px;width:977px;height:2px;background:#8c8c8c"></div>
<div class="a" style="left:643px;top:534px;width:977px;height:2px;background:#8c8c8c"></div>
<div class="t" style="left:643.0px;top:513px;width:255.5px;text-align:center;font-size:16.3px;font-weight:bold;color:#000;letter-spacing:0.5px">Channel</div>
<div class="t" style="left:898.5px;top:513px;width:120.2px;text-align:center;font-size:16.3px;font-weight:bold;color:#000;letter-spacing:0.5px">Start Value</div>
<div class="t" style="left:1018.7px;top:513px;width:120.0px;text-align:center;font-size:16.3px;font-weight:bold;color:#000;letter-spacing:0.5px">End Value</div>
<div class="t" style="left:1138.7px;top:513px;width:120.0px;text-align:center;font-size:16.3px;font-weight:bold;color:#000;letter-spacing:0.5px">Difference</div>
<div class="t" style="left:1258.7px;top:513px;width:120.1px;text-align:center;font-size:16.3px;font-weight:bold;color:#000;letter-spacing:0.5px">Maximum</div>
<div class="t" style="left:1378.8px;top:513px;width:120.0px;text-align:center;font-size:16.3px;font-weight:bold;color:#000;letter-spacing:0.5px">Minimum</div>
<div class="t" style="left:1498.8px;top:513px;width:120.1px;text-align:center;font-size:16.3px;font-weight:bold;color:#000;letter-spacing:0.5px">Average</div>
<div class="a" style="left:897.5px;top:505px;width:2px;height:30px;background:#8c8c8c"></div>
<div class="a" style="left:1017.7px;top:505px;width:2px;height:30px;background:#8c8c8c"></div>
<div class="a" style="left:1137.7px;top:505px;width:2px;height:30px;background:#8c8c8c"></div>
<div class="a" style="left:1257.7px;top:505px;width:2px;height:30px;background:#8c8c8c"></div>
<div class="a" style="left:1377.8px;top:505px;width:2px;height:30px;background:#8c8c8c"></div>
<div class="a" style="left:1497.8px;top:505px;width:2px;height:30px;background:#8c8c8c"></div>
<div class="a" style="left:1617.9px;top:505px;width:2px;height:30px;background:#8c8c8c"></div>
<div class="t" style="left:648.5px;top:544.0px;font-size:16px;color:#000;letter-spacing:0px">Time (secs)</div>
<div class="t" style="left:904.0px;top:544.0px;font-size:16px;color:#000;letter-spacing:0.2px">195,530</div>
<div class="t" style="left:1024.2px;top:544.0px;font-size:16px;color:#000;letter-spacing:0.2px">203,210</div>
<div class="t" style="left:1144.2px;top:544.0px;font-size:16px;color:#000;letter-spacing:0.2px">7,680</div>
<div class="t" style="left:1264.2px;top:544.0px;font-size:16px;color:#000;letter-spacing:0.5px">------</div>
<div class="t" style="left:1384.3px;top:544.0px;font-size:16px;color:#000;letter-spacing:0.5px">------</div>
<div class="t" style="left:1504.3px;top:544.0px;font-size:16px;color:#000;letter-spacing:0.5px">------</div>
<div class="a" style="left:644px;top:564.5px;width:975px;height:1.6px;background:#a8a8a8"></div>
<div class="t" style="left:648.5px;top:574.3px;font-size:16px;color:#000;letter-spacing:0px">Speed (km/h)</div>
<div class="t" style="left:904.0px;top:574.3px;font-size:16px;color:#000;letter-spacing:0.2px">250,140</div>
<div class="t" style="left:1024.2px;top:574.3px;font-size:16px;color:#000;letter-spacing:0.2px">280,020</div>
<div class="t" style="left:1144.2px;top:574.3px;font-size:16px;color:#000;letter-spacing:0.2px">29,880</div>
<div class="t" style="left:1264.2px;top:574.3px;font-size:16px;color:#000;letter-spacing:0.2px">280,020</div>
<div class="t" style="left:1384.3px;top:574.3px;font-size:16px;color:#000;letter-spacing:0.2px">249,977</div>
<div class="t" style="left:1504.3px;top:574.3px;font-size:16px;color:#000;letter-spacing:0.2px">265,905</div>
<div class="a" style="left:644px;top:594.6px;width:975px;height:1.6px;background:#a8a8a8"></div>
<div class="t" style="left:648.5px;top:604.4px;font-size:16px;color:#000;letter-spacing:0px">Distance (metres)</div>
<div class="t" style="left:904.0px;top:604.4px;font-size:16px;color:#000;letter-spacing:0.2px">10546,750</div>
<div class="t" style="left:1024.2px;top:604.4px;font-size:16px;color:#000;letter-spacing:0.2px">11115,518</div>
<div class="t" style="left:1144.2px;top:604.4px;font-size:16px;color:#000;letter-spacing:0.2px">568,767</div>
<div class="t" style="left:1264.2px;top:604.4px;font-size:16px;color:#000;letter-spacing:0.5px">------</div>
<div class="t" style="left:1384.3px;top:604.4px;font-size:16px;color:#000;letter-spacing:0.5px">------</div>
<div class="t" style="left:1504.3px;top:604.4px;font-size:16px;color:#000;letter-spacing:0.5px">------</div>
<div class="a" style="left:644px;top:624.4px;width:975px;height:1.6px;background:#a8a8a8"></div>
<div class="a" style="left:897.7px;top:535px;width:1.6px;height:90px;background:#a8a8a8"></div>
<div class="a" style="left:1017.9px;top:535px;width:1.6px;height:90px;background:#a8a8a8"></div>
<div class="a" style="left:1137.9px;top:535px;width:1.6px;height:90px;background:#a8a8a8"></div>
<div class="a" style="left:1257.9px;top:535px;width:1.6px;height:90px;background:#a8a8a8"></div>
<div class="a" style="left:1378.0px;top:535px;width:1.6px;height:90px;background:#a8a8a8"></div>
<div class="a" style="left:1498.0px;top:535px;width:1.6px;height:90px;background:#a8a8a8"></div>
<div class="a" style="left:1618.1px;top:535px;width:1.6px;height:90px;background:#a8a8a8"></div>
<div class="a" style="left:1503px;top:411px;width:17px;height:2.5px;background:#1e1e1e"></div>
<div class="a" style="left:1542px;top:399.5px;width:18px;height:13.5px;border:2px solid #1e1e1e;border-top-width:2.5px"></div>
<div class="a" style="left:1571px;top:391px;width:69px;height:31px;background:#c75050"></div>
<svg class="a" style="left:1571px;top:391px" width="69" height="31"><path d="M27 8 L42 23 M42 8 L27 23" stroke="#fff" stroke-width="2.2"/></svg>
<svg class="a" style="left:637px;top:401px" width="24" height="24" viewBox="0 0 24 24"><rect x="0" y="0" width="24" height="14.5" fill="#0b2f5e"/><path d="M0.3 3.6 Q6 3.2 11.5 3.4 L15 5.5 Q19 7 24 8 L24 10.5 Q19 11 16.5 9 Q13 6.5 11 5.6 Q6 5.4 0.3 5.6Z" fill="#e6ecf2"/><ellipse cx="8" cy="1.8" rx="1.5" ry="0.6" fill="#b8c6d6"/><path d="M0 11 L4 10.5 L7 12 L11 10.8 L14 12 L17 11 L17.5 24 L0 24Z" fill="#f2f2f2"/><path d="M6 12.5 L8.5 12 L9.5 15 L7.5 16.5Z M2 18 L4 17 L4.5 19 Z M0.5 23.5 L4 20.5 L6 23.5Z M11 12.5 L13 12 L12 19 L11 24 L9.5 24 L10 18Z M14.5 13 L16.5 12.5 L17 24 L15 24 L14 20Z M8 17.5 L9.5 18.5 L8.5 20Z" fill="#111"/></svg>
</body></html>
